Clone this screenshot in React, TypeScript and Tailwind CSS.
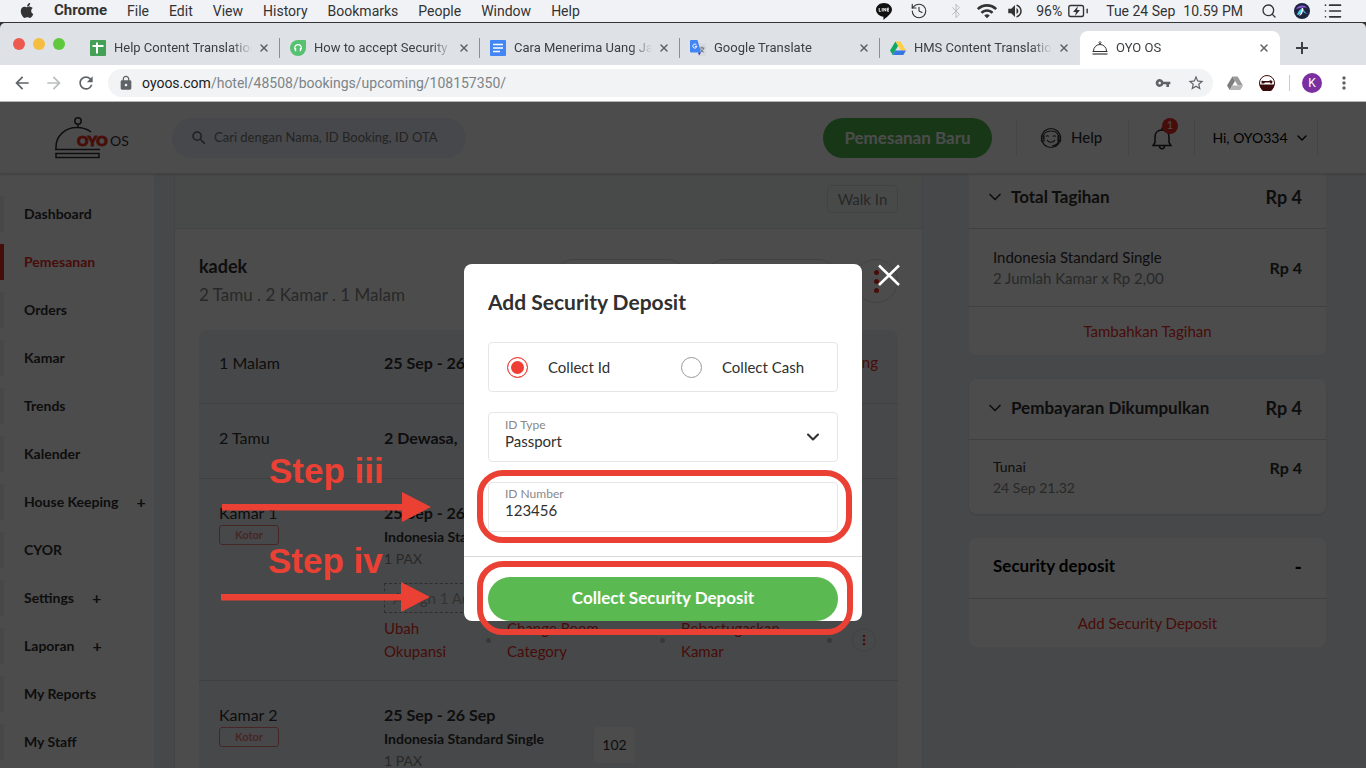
import type { ReactNode } from "react";
import { Battery, Bluetooth, ChevronDown, History, List, Search, X } from "lucide-react";
import { FaApple } from "react-icons/fa";
import {
  MdArrowBack,
  MdArrowForward,
  MdLock,
  MdMoreVert,
  MdOutlineStarBorder,
  MdRefresh,
  MdSearch,
  MdVolumeUp,
  MdVpnKey,
  MdWifi,
} from "react-icons/md";

const menus = ["File", "Edit", "View", "History", "Bookmarks", "People", "Window", "Help"];

const navItems = [
  { label: "Dashboard" },
  { label: "Pemesanan", active: true },
  { label: "Orders" },
  { label: "Kamar" },
  { label: "Trends" },
  { label: "Kalender" },
  { label: "House Keeping", expandable: true },
  { label: "CYOR" },
  { label: "Settings", expandable: true },
  { label: "Laporan", expandable: true },
  { label: "My Reports" },
  { label: "My Staff" },
];

function DriveIcon({ gray = false }: { gray?: boolean }) {
  return (
    <svg className="size-4 shrink-0" viewBox="0 0 16 16">
      <path d="M5.4 1.5h5.2L16 10.6h-5.2z" fill={gray ? "#9a9a9a" : "#ffcf48"} />
      <path d="M5.4 1.5 8 6 2.7 15 0 10.6z" fill={gray ? "#7d7d7d" : "#11a861"} />
      <path d="M5.3 10.6H16L13.3 15H2.7z" fill={gray ? "#b5b5b5" : "#3777e3"} />
    </svg>
  );
}

function SheetIcon() {
  return (
    <svg className="size-4 shrink-0" viewBox="0 0 16 16">
      <rect width="16" height="16" rx="1" fill="#43a055" />
      <path d="M2.5 6h11M7 2.5v11" stroke="#fff" strokeWidth="2" />
    </svg>
  );
}

function HeadsetIcon() {
  return (
    <svg className="size-4 shrink-0" viewBox="0 0 16 16">
      <path d="M8 0h7a1 1 0 0 1 1 1v7a8 8 0 1 1-8-8z" fill="#56c271" />
      <path d="M4.8 9V7.8a3.2 3.2 0 0 1 6.4 0V9" fill="none" stroke="#fff" strokeWidth="1.2" />
      <path d="M4.2 8h2v3.200H5zM9.800 8h2L11 11.200H9.800z" fill="#fff" />
    </svg>
  );
}

function DocIcon() {
  return (
    <svg className="size-4 shrink-0" viewBox="0 0 16 16">
      <rect width="16" height="16" rx="1" fill="#4285f4" />
      <path d="M3 4.5h10M3 8h10M3 11.5h7" stroke="#fff" strokeWidth="1.6" />
    </svg>
  );
}

function TranslateIcon() {
  return (
    <svg className="size-4 shrink-0" viewBox="0 0 16 16">
      <path d="M6 3.5h9a1 1 0 0 1 1 1V15a1 1 0 0 1-1 1H9z" fill="#d8d9dc" />
      <path d="M9.5 8h5M12 6.5V8m1.7 0c-.4 2-2 3.5-3.5 4.3M10.5 9c.7 1.5 2 2.7 3.3 3.3" fill="none" stroke="#6b7480" />
      <path d="M1 0h6.5L11 12.500H1a1 1 0 0 1-1-1V1a1 1 0 0 1 1-1z" fill="#4285f4" />
      <path d="M8 12.500h3l-2 3z" fill="#2a49b0" />
      <path d="M6.5 5a2 2 0 1 0 .3 1.500H5" fill="none" stroke="#fff" />
    </svg>
  );
}

function ClocheIcon() {
  return (
    <svg className="size-4 shrink-0" viewBox="0 0 16 16" fill="none" stroke="#333">
      <path d="M1.5 11a6.500 6.500 0 0 1 13 0" />
      <path d="M7 2.500 8 1.500l1 1L8 4z" />
      <path d="M.5 11.500h15" />
      <path d="M.5 14h15" stroke="#888" strokeWidth="2" />
    </svg>
  );
}

const tabs = [
  { title: "Help Content Translation", icon: <SheetIcon /> },
  { title: "How to accept Security Deposit", icon: <HeadsetIcon /> },
  { title: "Cara Menerima Uang Jaminan", icon: <DocIcon /> },
  { title: "Google Translate", icon: <TranslateIcon /> },
  { title: "HMS Content Translation", icon: <DriveIcon /> },
  { title: "OYO OS", icon: <ClocheIcon />, active: true },
];

function MenuBar() {
  return (
    <div className="flex h-[22px] shrink-0 items-center justify-between bg-[#f1f2f6] pr-[22px] pl-5 text-sm text-[#333]">
      <div className="flex items-center gap-5">
        <FaApple className="h-[17px] w-3.5" />
        <span className="text-[15px] font-bold">Chrome</span>
        {menus.map((menu) => (
          <span key={menu}>{menu}</span>
        ))}
      </div>
      <div className="flex items-center">
        <svg className="mr-[18px] h-[17px] w-4" viewBox="0 0 16 17">
          <path d="M8 0c4.4 0 8 2.9 8 6.6 0 3.7-4.5 7-8 9.9-.8.5-.6-.5-.5-2.700C3.400 13.500 0 10.400 0 6.600 0 2.900 3.600 0 8 0z" fill="#111" />
          <path d="M3.2 5v3.300h1.600M6.200 5v3.500M7.800 8.500V5.200l2 3V5M13 5.200h-1.700v3H13M11.300 6.700H13" fill="none" stroke="#fff" strokeWidth=".9" />
        </svg>
        <History className="mr-5 size-[18px]" strokeWidth={1.5} />
        <Bluetooth className="mr-3 h-4 w-4 text-[#bbb]" strokeWidth={1.5} />
        <MdWifi className="mr-2 size-[22px]" />
        <MdVolumeUp className="mr-3 size-[18px]" />
        <span className="mr-1 text-sm">96%</span>
        <span className="relative mr-4 block">
          <Battery className="h-[22px] w-6" strokeWidth={1.5} />
          <svg className="absolute top-1.5 left-1.5 h-2.5 w-2.5" viewBox="0 0 10 10">
            <path d="M6 0 1 6h3l-1 4 5-6H5z" fill="#333" />
          </svg>
        </span>
        <span className="mr-2">Tue 24 Sep</span>
        <span className="mr-[18px]">10.59 PM</span>
        <Search className="mr-[17px] size-4" strokeWidth={2} />
        <svg className="mr-3 size-4" viewBox="0 0 16 16">
          <circle cx="8" cy="8" r="8" fill="#1d2440" />
          <path d="M2 6c2-4 9-5 11-1-3-1-7 0-11 1z" fill="#8d5bd8" />
          <path d="M3 12c1-4 4-7 6-7 1 3 2 5 5 6-3-1-4-1-5-3-2 2-3 4-6 4z" fill="#54c8e8" />
          <path d="M8 5c0 3-1 5-3 8 3-1 4-3 4-8z" fill="#fff" />
        </svg>
        <List className="h-5 w-[22px]" strokeWidth={2} />
      </div>
    </div>
  );
}

function TabStrip() {
  return (
    <div className="flex h-[42px] shrink-0 items-end rounded-t-[5px] bg-[#dee1e6]">
      <div className="flex h-full w-20 shrink-0 items-center gap-2 pl-[13px]">
        <span className="size-3 rounded-full bg-[#ed594f]" />
        <span className="size-3 rounded-full bg-[#f5be41]" />
        <span className="size-3 rounded-full bg-[#5fc93e]" />
      </div>
      {tabs.map((tab, i) => (
        <div
          key={tab.title}
          className={
            tab.active
              ? "flex h-[34px] w-[200px] items-center rounded-t-lg bg-white pr-2.5 pl-3"
              : "flex h-[34px] w-[200px] items-center pr-2.5 pl-2.5"
          }
        >
          {tab.icon}
          <span className="ml-2 flex-1 overflow-hidden mask-r-from-85% text-[13px] whitespace-nowrap text-[#3c4043]">
            {tab.title}
          </span>
          <button type="button" aria-label={"Close " + tab.title} className="ml-1.5">
            <X className="size-3 text-[#5f6368]" strokeWidth={3} />
          </button>
          {i < 4 && <span className="-mr-2.5 ml-[9px] h-5 w-px bg-[#8a8d91]" />}
        </div>
      ))}
      <button type="button" aria-label="New tab" className="ml-3.5 flex h-[34px] items-center">
        <svg className="size-4" viewBox="0 0 16 16">
          <path d="M8 2v12M2 8h12" stroke="#3c4043" strokeWidth="2" />
        </svg>
      </button>
    </div>
  );
}

function Toolbar() {
  return (
    <div className="flex h-[37px] shrink-0 items-center border-b border-[#b6b4b6] bg-white px-3 text-[#5f6368]">
      <button type="button" aria-label="Back" className="mr-3">
        <MdArrowBack className="size-5" />
      </button>
      <button type="button" aria-label="Forward" className="mr-3 text-[#bbbdbf]">
        <MdArrowForward className="size-5" />
      </button>
      <button type="button" aria-label="Reload" className="mr-3">
        <MdRefresh className="size-5" />
      </button>
      <div className="flex h-7 flex-1 items-center rounded-full bg-[#f1f3f4] pr-2 pl-2.5">
        <MdLock className="mr-2 size-4 shrink-0" />
        <p className="flex-1 text-sm text-[#7c8489]">
          <span className="text-[#202124]">oyoos.com</span>/hotel/48508/bookings/upcoming/108157350/
        </p>
        <MdVpnKey className="mr-4 size-4" />
        <MdOutlineStarBorder className="size-[18px]" />
      </div>
      <div className="ml-3.5 flex items-center">
        <DriveIcon gray />
        <svg className="mr-3.5 ml-4 size-4" viewBox="0 0 16 16">
          <circle cx="8" cy="8" r="7.5" fill="#fff" stroke="#3a0a0a" />
          <path d="M.5 9.500h15a7.500 7.500 0 0 1-15 0z" fill="#3a0a0a" />
          <path d="M2.500 8.500V6c1-.8 2 0 3 0H10c1-1 2-1 3.500.2L13 8.500h-1.500l-.5-1H6l-1 1z" fill="#3a0a0a" />
        </svg>
        <span className="mr-3 h-4 w-px bg-[#c8cacc]" />
        <span className="mr-3 flex size-5 items-center justify-center rounded-full bg-[#7b2fa0] text-xs text-white">K</span>
        <MdMoreVert className="size-5" />
      </div>
    </div>
  );
}

function Logo() {
  return (
    <svg className="h-[42px] w-[75px]" viewBox="0 0 75 42" fill="none" stroke="#30303a" strokeWidth="1.5">
      <circle cx="23" cy="4" r="3.2" />
      <path d="M23 7.500V10" />
      <path d="M1 32v-2C1 19 10 10.500 22 10.500c6 0 10.500 1.800 14 4.500M0 32.500h45" />
      <path d="M1 36.500h43v4H1z" />
      <text x="22" y="29" stroke="#ee2e24" strokeWidth="1" fill="#ee2e24" fontSize="14" fontWeight="900" fontFamily="Lato, sans-serif">
        OYO
      </text>
      <text x="55" y="29" stroke="none" fill="#30303a" fontSize="14" fontFamily="Lato, sans-serif">
        OS
      </text>
    </svg>
  );
}

function Header() {
  return (
    <header className="relative flex h-[72px] shrink-0 items-center border-b border-[#ddd] bg-white pr-12 pl-[55px] shadow-sm">
      <Logo />
      <label className="ml-[42px] flex h-10 w-[294px] items-center rounded-full bg-[#edf2fa] pl-[18px]">
        <MdSearch className="size-[18px] text-[#666]" />
        <input
          aria-label="Cari"
          placeholder="Cari dengan Nama, ID Booking, ID OTA"
          className="ml-1.5 flex-1 text-[13px] outline-none placeholder:text-[#777]"
        />
      </label>
      <button type="button" className="mr-6 ml-auto h-10 w-[169px] rounded-full bg-[#4db84f] text-[17px] font-bold text-white">
        Pemesanan Baru
      </button>
      <a href="#help" className="flex h-9 w-28 items-center gap-2 border-l border-[#e6e6e6] pl-[22px] text-[15px] font-medium text-[#303030]">
        <svg className="size-6" viewBox="0 0 24 24" fill="none" stroke="currentColor" strokeWidth="1.2">
          <circle cx="12" cy="12" r="9.5" />
          <path d="M4 13c0-5 3-8 8-8s8 3 8 8c0 4-3 7-7 7M7 10.500c.7-1 2-1 2.700 0M14 10.500c.7-1 2-1 2.700 0M8 14c2 3 6 3 8 0" />
          <path d="M2.500 10v5H5v-5zM19 10v5h2.500v-5z" />
        </svg>
        Help
      </a>
      <button type="button" aria-label="Notifications" className="relative flex h-9 w-[66px] items-center justify-center border-l border-[#e6e6e6]">
        <svg className="h-6 w-5" viewBox="0 0 20 24" fill="none" stroke="#222" strokeWidth="1.5">
          <path d="M1 19.500h18l-2-3V11c0-4-2.500-7-7-7s-7 3-7 7v5.500zM10 1.500V4M7.500 20c0 3.500 5 3.500 5 0" />
        </svg>
        <span className="absolute -top-0.5 right-4 flex size-4 items-center justify-center rounded-full bg-[#ee2e24] text-[11px] text-white">1</span>
      </button>
      <button type="button" className="flex h-9 w-[124px] items-center justify-center gap-1.5 border-x border-[#e6e6e6] pl-2.5 text-sm text-black">
        Hi, OYO334
        <ChevronDown className="size-4" />
      </button>
    </header>
  );
}

function Sidebar() {
  return (
    <nav className="w-[154px] shrink-0 bg-white pt-4">
      {navItems.map((item) => (
        <a key={item.label} href={"#" + item.label} className="flex h-12 items-center text-sm font-bold">
          <span className={item.active ? "h-9 w-1 bg-[#ee2e24]" : "h-9 w-1 bg-[#edf2f8]"} />
          <span className={item.active ? "pl-5 text-[#ee2e24]" : "pl-5 text-[#303030]"}>{item.label}</span>
          {item.expandable && <span className="pl-[18px] text-base text-[#303030]">+</span>}
        </a>
      ))}
    </nav>
  );
}

function RoomRow({ name, children, room }: { name: string; children?: ReactNode; room?: string }) {
  return (
    <div className="flex border-b border-[#d3d6d9] px-5 pt-[22px] pb-[17px]">
      <div className="w-[165px] shrink-0">
        <p className="text-base leading-6 text-[#303030]">{name}</p>
        <span className="flex h-5 w-[60px] items-center justify-center rounded-[3px] border border-[#ee8080] text-[11px] font-bold text-[#ee8080]">
          Kotor
        </span>
      </div>
      <div className="flex-1 text-[#303030]">
        <p className="text-base leading-6 font-bold">25 Sep - 26 Sep</p>
        <div className="flex">
          <div className="w-[210px]">
            <p className="text-sm leading-6 font-bold">Indonesia Standard Single</p>
            <p className="text-sm leading-5 text-[#888]">1 PAX</p>
          </div>
          {room && <span className="flex h-9 w-[41px] items-center justify-center rounded bg-white text-sm">{room}</span>}
        </div>
        {children}
      </div>
    </div>
  );
}

function Booking() {
  return (
    <main className="flex-1 border-x border-[#e2e4e6] bg-white">
      <div className="flex h-[55px] items-center justify-end border-b border-[#dcdfdd] bg-[#f2f7f5] pr-6 pb-1">
        <span className="flex h-7 w-[71px] items-center justify-center rounded-sm border border-[#ddd] text-[15px] text-[#888]">
          Walk In
        </span>
      </div>
      <div className="px-6">
        <div className="flex pt-[23px]">
          <div className="flex-1">
            <h1 className="text-lg leading-7 font-bold text-[#303030]">kadek</h1>
            <p className="mt-[3px] text-[17px] leading-6 text-[#888]">2 Tamu . 2 Kamar . 1 Malam</p>
          </div>
          <div className="mt-[7px] flex gap-3.5">
            <span className="h-11 w-[137px] rounded-full border border-[#ddd]" />
            <span className="h-11 w-[137px] rounded-full border border-[#ddd]" />
            <button type="button" aria-label="More" className="flex size-11 flex-col items-center justify-center gap-1 rounded-full border border-[#ddd]">
              <span className="size-[5px] rounded-full bg-[#ee2e24]" />
              <span className="size-[5px] rounded-full bg-[#ee2e24]" />
              <span className="size-[5px] rounded-full bg-[#ee2e24]" />
            </button>
          </div>
        </div>
        <section className="mt-[23px] rounded-t-lg bg-[#eef2f7] text-base text-[#303030]">
          <div className="flex h-[74px] items-center border-b border-[#d3d6d9] px-5 pb-2">
            <span className="w-[165px]">1 Malam</span>
            <span className="flex-1 font-bold">25 Sep - 26 Sep</span>
            <span className="text-[15px] text-[#ee2e24]">Upcoming</span>
          </div>
          <div className="flex h-[75px] items-center border-b border-[#d3d6d9] px-5 pb-1.5">
            <span className="w-[165px]">2 Tamu</span>
            <span className="font-bold">2 Dewasa,</span>
          </div>
          <RoomRow name="Kamar 1">
            <div className="mt-3.5 flex h-[30px] w-[150px] items-center border border-dashed border-[#999] px-2 text-[15px] whitespace-nowrap text-[#aaa]">
              Assign 1 Add
            </div>
            <div className="mt-1 flex items-center text-[15px] leading-[23px] text-[#ee2e24]">
              <a href="#okupansi" className="w-[102px] pr-8">Ubah Okupansi</a>
              <span className="mr-4 size-[5px] rounded-full bg-[#bbb]" />
              <a href="#category" className="w-[153px] pr-12">Change Room Category</a>
              <span className="mr-4 size-[5px] rounded-full bg-[#bbb]" />
              <a href="#kamar" className="w-[146px] pr-8">Bebastugaskan Kamar</a>
              <span className="mr-5 size-[5px] rounded-full bg-[#bbb]" />
              <button type="button" aria-label="Room options" className="flex size-6 items-center justify-center rounded-full border border-[#ddd]">
                <MdMoreVert className="size-4" />
              </button>
            </div>
          </RoomRow>
          <RoomRow name="Kamar 2" room="102" />
        </section>
      </div>
    </main>
  );
}

function Bills() {
  return (
    <aside className="ml-[46px] w-[357px] shrink-0 text-[15px] text-[#303030]">
      <section className="rounded-b-lg bg-white">
        <div className="flex h-[55px] items-center border-b border-[#d8d8d8] pr-6 pb-2 pl-4 font-bold">
          <ChevronDown className="size-5" />
          <h2 className="ml-1.5 flex-1 text-[17px]">Total Tagihan</h2>
          <span className="text-lg">Rp 4</span>
        </div>
        <div className="flex h-[78px] items-center border-b border-[#d8d8d8] pr-6 pl-6">
          <div className="flex-1 leading-[21px]">
            <p>Indonesia Standard Single</p>
            <p className="text-[#888]">2 Jumlah Kamar x Rp 2,00</p>
          </div>
          <span className="text-base font-bold">Rp 4</span>
        </div>
        <a href="#tagihan" className="flex h-12 items-center justify-center text-[#ee2e24]">Tambahkan Tagihan</a>
      </section>
      <section className="mt-6 rounded-lg bg-white shadow-sm">
        <div className="flex h-[61px] items-center border-b border-[#d8d8d8] pr-6 pb-0.5 pl-4 font-bold">
          <ChevronDown className="size-5" />
          <h2 className="ml-1.5 flex-1 text-[17px]">Pembayaran Dikumpulkan</h2>
          <span className="text-lg">Rp 4</span>
        </div>
        <div className="flex h-[74px] items-start px-6 pt-4">
          <div className="flex-1 text-sm leading-[21px]">
            <p>Tunai</p>
            <p className="text-[#888]">24 Sep 21.32</p>
          </div>
          <span className="text-base font-bold">Rp 4</span>
        </div>
      </section>
      <section className="mt-6 rounded-lg bg-white">
        <div className="flex h-[61px] items-center justify-between border-b border-[#d8d8d8] px-6 pb-1 text-[17px] font-bold text-black">
          <h2>Security deposit</h2>
          <span className="text-xl">-</span>
        </div>
        <a href="#deposit" className="flex h-12 items-center justify-center text-[#ee2e24]">Add Security Deposit</a>
      </section>
    </aside>
  );
}

function Step({ label }: { label: string }) {
  return (
    <div className="pointer-events-none absolute right-full bottom-[9px] mr-[58px] w-[209px]">
      <p className="pl-[47px] font-['Liberation_Sans',sans-serif] text-[35px] leading-[42px] font-bold text-[#eb4034]">{label}</p>
      <svg className="h-[30px] w-full" viewBox="0 0 209 30" fill="#eb4034">
        <path d="M0 12h180V0l29 15-29 15V18.500H0z" />
      </svg>
    </div>
  );
}

function DepositDialog() {
  return (
    <div className="absolute inset-0 flex items-center justify-center bg-black/70 pt-[15px]">
      <div className="flex items-start gap-3.5">
        <form role="dialog" aria-labelledby="deposit-title" className="w-[398px] rounded-lg bg-white pt-6 text-[#303030]">
          <h2 id="deposit-title" className="px-6 text-[21px] leading-7 font-bold">Add Security Deposit</h2>
          <div className="mt-[26px] flex flex-col gap-5 px-6 pb-6">
            <div className="flex h-[50px] items-center rounded border border-[#e6e6e6] pl-[18px] text-[15px]">
              <label className="flex w-[174px] items-center gap-5">
                <input
                  type="radio"
                  name="deposit"
                  defaultChecked
                  className="size-[21px] appearance-none rounded-full border border-[#999] checked:border-[#ee3e36] checked:bg-[#ee3e36] checked:shadow-[inset_0_0_0_3px_white]"
                />
                Collect Id
              </label>
              <label className="flex items-center gap-5">
                <input
                  type="radio"
                  name="deposit"
                  className="size-[21px] appearance-none rounded-full border border-[#999] checked:border-[#ee3e36] checked:bg-[#ee3e36] checked:shadow-[inset_0_0_0_3px_white]"
                />
                Collect Cash
              </label>
            </div>
            <div className="relative h-[50px] rounded border border-[#e6e6e6] px-4 pt-1">
              <label htmlFor="id-type" className="block text-xs leading-4 text-[#888]">ID Type</label>
              <select id="id-type" className="block w-full appearance-none text-[15px] leading-4 outline-none">
                <option>Passport</option>
              </select>
              <ChevronDown className="pointer-events-none absolute top-3.5 right-3.5 size-5" strokeWidth={2.5} />
            </div>
            <div className="relative h-[50px] rounded border border-[#e6e6e6] px-4 pt-[3px]">
              <label htmlFor="id-number" className="block text-xs leading-4 text-[#888]">ID Number</label>
              <input id="id-number" defaultValue="123456" className="block w-full text-[15px] leading-4 outline-none" />
              <span className="pointer-events-none absolute -top-[13px] -right-[15px] -bottom-3 -left-3 rounded-[26px] border-6 border-[#eb4034]" />
              <Step label="Step iii" />
            </div>
          </div>
          <div className="border-t border-[#dadada] px-6 pt-5">
            <div className="relative">
              <button type="button" className="block h-11 w-full rounded-full bg-[#5bb951] pb-0.5 text-[17px] font-bold text-white">
                Collect Security Deposit
              </button>
              <span className="pointer-events-none absolute -top-4 -right-[15px] -bottom-3.5 -left-[11px] rounded-[26px] border-6 border-[#eb4034]" />
              <Step label="Step iv" />
            </div>
          </div>
        </form>
        <button type="button" aria-label="Close" className="text-white">
          <svg className="size-[26px]" viewBox="0 0 26 26">
            <path d="m3 1.5 20 19.500M23 1.500 3 21" stroke="currentColor" strokeWidth="2.5" />
          </svg>
        </button>
      </div>
    </div>
  );
}

export default function App() {
  return (
    <div className="flex h-screen flex-col overflow-hidden bg-[#333] font-[Roboto,sans-serif]">
      <MenuBar />
      <div className="mt-px flex min-h-0 flex-1 flex-col">
        <TabStrip />
        <Toolbar />
        <div className="relative flex min-h-0 flex-1 flex-col overflow-hidden bg-[#eef2f7] font-[Lato,sans-serif]">
          <Header />
          <div className="flex min-h-0 flex-1 overflow-hidden pr-10">
            <Sidebar />
            <div className="w-5 shrink-0" />
            <Booking />
            <Bills />
          </div>
          <DepositDialog />
        </div>
      </div>
    </div>
  );
}
